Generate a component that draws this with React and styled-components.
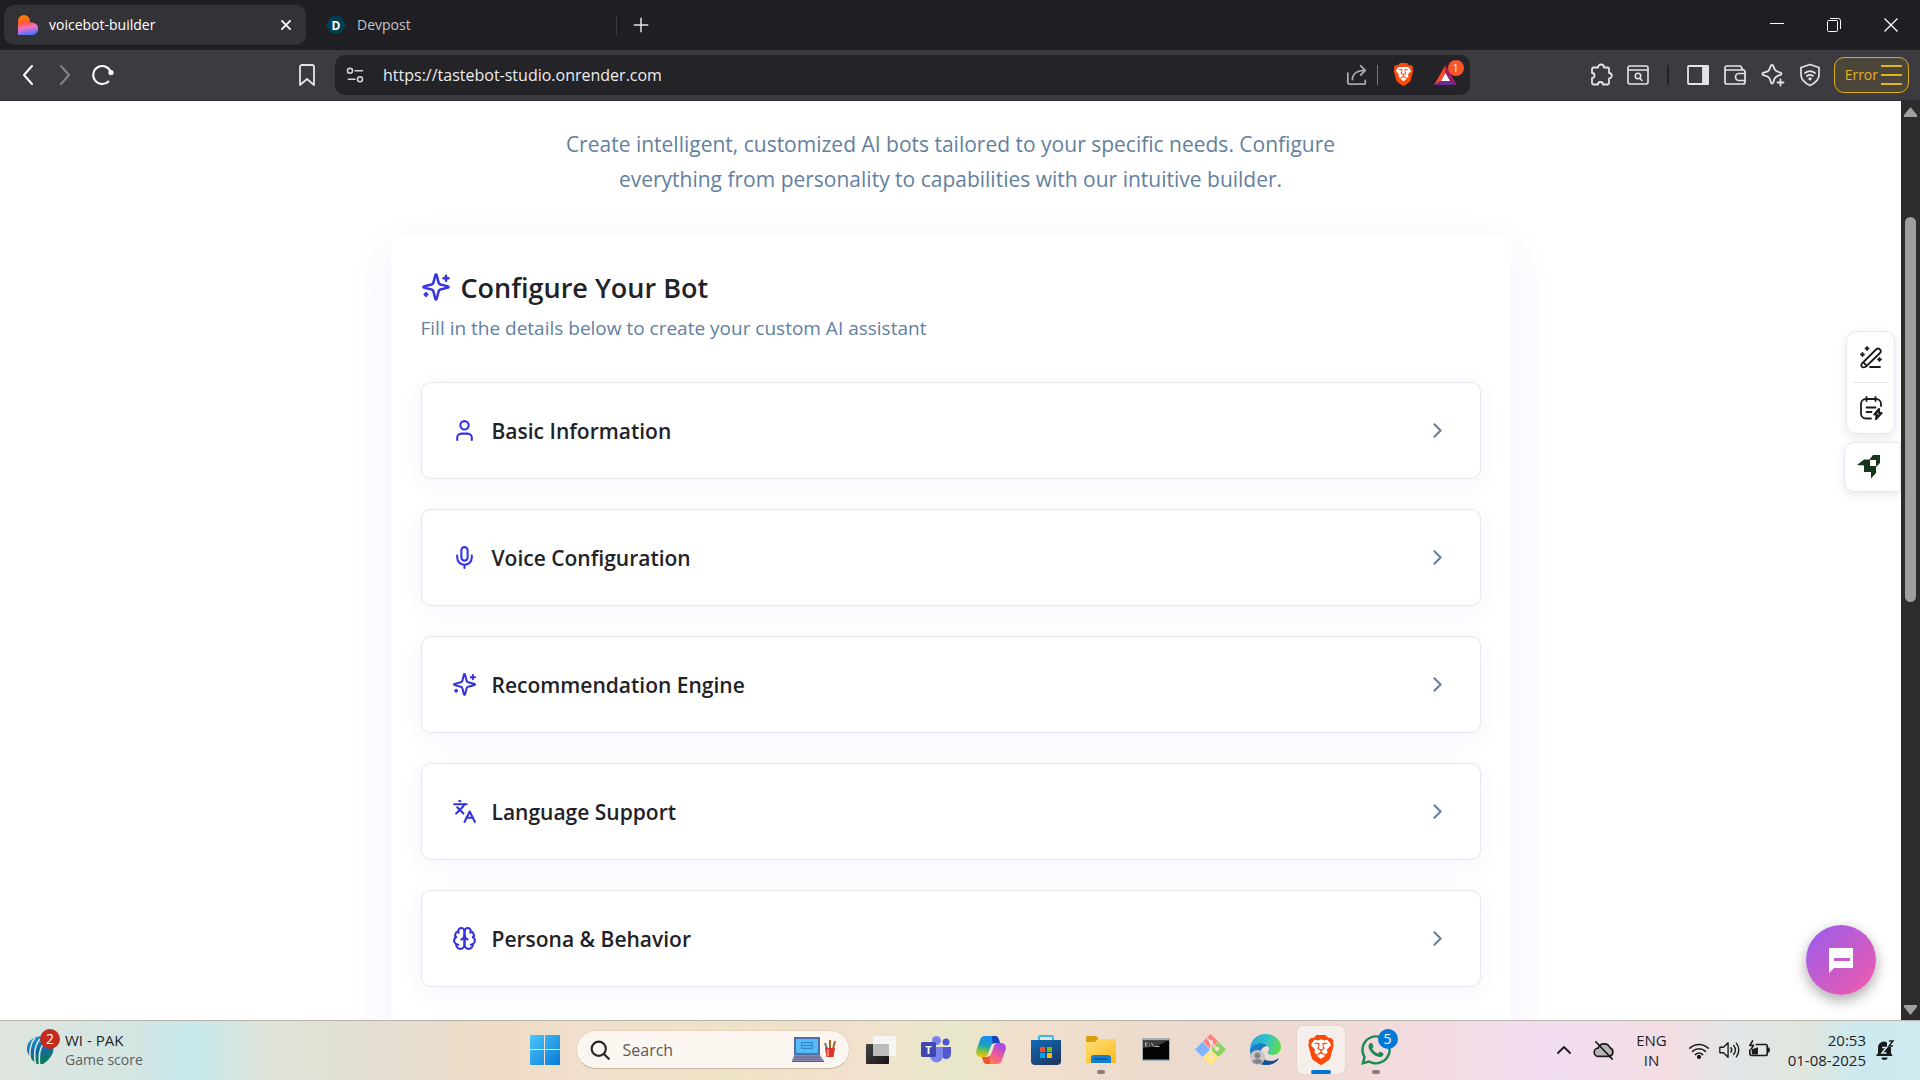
import React from "react";
import styled, { createGlobalStyle, css } from "styled-components";
import { ChevronRight, ChevronUp, Languages, Mic, User } from "lucide-react";
import { SiBrave } from "react-icons/si";
import { FaWhatsapp } from "react-icons/fa";

const ink = "#1f2328";
const slate = "#64809f";
const indigo = "#3634e0";

const GlobalStyle = createGlobalStyle`
  * {
    box-sizing: border-box;
  }
  body {
    margin: 0;
    overflow: hidden;
    font-family: "Open Sans", "Noto Sans", sans-serif;
    color: ${ink};
  }
  button, input {
    font: inherit;
    color: inherit;
    margin: 0;
    padding: 0;
    border: 0;
    background: none;
  }
  h1, h2, p {
    margin: 0;
  }
  svg {
    display: block;
    flex: none;
  }
`;

const Desktop = styled.div`
  display: grid;
  grid-template-rows: 50px 51px minmax(0, 1fr) 60px;
  height: 100vh;
`;

/* ---------- browser chrome ---------- */

const TabStrip = styled.header`
  display: flex;
  align-items: center;
  padding-left: 4px;
  background: #1f1e23;
  color: #c4c4c8;
`;

const Tab = styled.div`
  display: flex;
  align-items: center;
  gap: 11px;
  width: ${({ $active }) => ($active ? 302 : 304)}px;
  height: 40px;
  padding: 0 12px 0 14px;
  border-radius: 10px;
  font-size: 14px;
  line-height: 18px;
  ${({ $active }) =>
    $active &&
    css`
      margin-right: 6px;
      background: #333237;
      color: #fff;
    `}
  span {
    flex: 1;
  }
`;

const IconButton = styled.button`
  display: flex;
  align-items: center;
  justify-content: center;
  width: ${({ $w }) => $w || 36}px;
  height: ${({ $h }) => $h || 40}px;
  flex: none;
  color: ${({ $color }) => $color || "#e4e4e6"};
`;

const Divider = styled.i`
  width: ${({ $thick }) => ($thick ? 2 : 1)}px;
  height: 20px;
  margin: 0 ${({ $gap }) => $gap || 0}px;
  background: ${({ $color }) => $color};
`;

const WindowControls = styled.div`
  display: flex;
  margin-left: auto;
`;

const Toolbar = styled.nav`
  display: flex;
  align-items: center;
  padding: 0 11px 1px 9px;
  background: #3c3b40;
  border-bottom: 1px solid #2c2b30;
`;

const NavButtons = styled.div`
  display: flex;
  margin-right: 168px;
`;

const AddressBar = styled.div`
  display: flex;
  align-items: center;
  flex: 1;
  max-width: 1135px;
  height: 40px;
  margin-left: 10px;
  padding-left: 10px;
  padding-right: 8px;
  border-radius: 10px;
  background: #242328;
  input {
    flex: 1;
    min-width: 0;
    margin-left: 18px;
    font-size: 16px;
    color: #ececee;
    outline: none;
  }
`;

const BadgeHolder = styled.span`
  position: relative;
  display: flex;
`;

const RewardBadge = styled.b`
  position: absolute;
  top: -5px;
  right: -7px;
  width: 16px;
  height: 16px;
  border-radius: 50%;
  background: #fb542b;
  color: #fff;
  font-size: 10px;
  font-weight: 400;
  line-height: 16px;
  text-align: center;
`;

const ToolbarActions = styled.div`
  display: flex;
  align-items: center;
  margin-left: auto;
`;

const ErrorButton = styled.button`
  display: flex;
  align-items: center;
  gap: 3px;
  height: 36px;
  margin-left: 5px;
  padding: 0 6px 0 10px;
  border: 1px solid #deaf14;
  border-radius: 10px;
  background: #4b4639;
  color: #e3b51c;
  font-size: 14px;
`;

/* ---------- page ---------- */

const Viewport = styled.div`
  position: relative;
  display: flex;
  min-height: 0;
  overflow: hidden;
`;

const Page = styled.main`
  flex: 1;
  min-width: 0;
  overflow: hidden;
  padding-top: 26px;
  background: #fff;
`;

const Intro = styled.p`
  max-width: 800px;
  margin: 0 auto 39px;
  color: ${slate};
  font-size: 21px;
  line-height: 35px;
  text-align: center;
`;

const Panel = styled.section`
  max-width: 1120px;
  margin: 0 auto;
  padding: 30px 30px 60px;
  border-radius: 10px;
  background: #fff;
  box-shadow: 0 15px 45px rgba(70, 70, 235, 0.09);
`;

const PanelTitle = styled.h1`
  display: flex;
  align-items: center;
  gap: 10px;
  height: 42px;
  font-size: 27px;
  font-weight: 600;
  svg {
    color: ${indigo};
  }
`;

const PanelText = styled.p`
  color: ${slate};
  font-size: 19px;
  line-height: 40px;
`;

const SectionList = styled.div`
  display: grid;
  gap: 30px;
  margin-top: 34px;
`;

const SectionButton = styled.button`
  display: flex;
  align-items: center;
  gap: 15px;
  width: 100%;
  height: 97px;
  padding: 0 30px;
  border: 1px solid #e4e7ee;
  border-radius: 10px;
  background: #fff;
  box-shadow: 0 5px 25px rgba(70, 70, 235, 0.06);
  font-size: 21px;
  font-weight: 600;
  text-align: left;
  span {
    flex: 1;
  }
  svg {
    color: ${indigo};
  }
  svg:last-child {
    color: ${slate};
  }
`;

const SideTools = styled.aside`
  position: absolute;
  top: 230px;
  right: 19px;
  display: flex;
  flex-direction: column;
  align-items: flex-end;
  gap: 8px;
`;

const ToolGroup = styled.div`
  display: flex;
  flex-direction: column;
  align-items: ${({ $docked }) => ($docked ? "flex-start" : "center")};
  width: ${({ $docked }) => ($docked ? 57 : 49)}px;
  margin-right: ${({ $docked }) => ($docked ? 0 : 6)}px;
  border: 1px solid #e6e8f0;
  border-radius: ${({ $docked }) => ($docked ? "10px 0 0 10px" : "10px")};
  background: #fff;
  box-shadow: 0 3px 10px rgba(40, 40, 90, 0.1);
  hr {
    width: 35px;
    height: 1px;
    margin: 0;
    border: 0;
    background: #e2e4ee;
  }
`;

const ChatButton = styled.button`
  position: absolute;
  right: 44px;
  bottom: 25px;
  display: flex;
  align-items: center;
  justify-content: center;
  width: 70px;
  height: 70px;
  border-radius: 50%;
  background: linear-gradient(135deg, #9b5cea 5%, #ef5bae 95%);
  box-shadow: 0 5px 14px rgba(0, 0, 0, 0.35);
`;

const ScrollTrack = styled.div`
  display: flex;
  flex-direction: column;
  align-items: center;
  width: 19px;
  padding: 6px 0 5px;
  background: #2c2c2c;
`;

const ScrollThumb = styled.div`
  width: 11px;
  height: 385px;
  margin: 100px 0 auto;
  border-radius: 6px;
  background: #9f9f9f;
`;

/* ---------- taskbar ---------- */

const Taskbar = styled.footer`
  display: grid;
  grid-template-columns: 1fr auto 1fr;
  align-items: center;
  padding-bottom: 2px;
  border-top: 1px solid #b7b3ac;
  background: linear-gradient(
    90deg,
    #dfe5de 0%,
    #d3e6e2 7%,
    #c6e9ec 10%,
    #dfe4da 14%,
    #e5ddcf 21%,
    #efdcc5 26%,
    #f0dfcc 30%,
    #efe3c6 38%,
    #f2e0cd 44%,
    #e8e8ca 50%,
    #f1e0cc 53%,
    #ebdacd 63%,
    #f2dbdd 73%,
    #f2def2 81%,
    #f3dde1 87%,
    #e3e5e8 90%,
    #e0e6de 94%,
    #cbe9ef 97%,
    #d0e9f0 100%
  );
`;

const Widget = styled.button`
  display: flex;
  align-items: center;
  gap: 11px;
  justify-self: start;
  margin-left: 27px;
  font-size: 15px;
  line-height: 20px;
  text-align: left;
  small {
    display: block;
    color: #5c605f;
    font-size: 14px;
  }
`;

const CountBadge = styled.b`
  position: absolute;
  top: ${({ $top }) => $top}px;
  right: ${({ $right }) => $right}px;
  width: 20px;
  height: 20px;
  border-radius: 50%;
  background: ${({ $bg }) => $bg};
  color: #fff;
  font-size: 14px;
  font-weight: 400;
  line-height: 20px;
  text-align: center;
`;

const AppRow = styled.div`
  display: flex;
  align-items: center;
  gap: 7px;
`;

const AppButton = styled.button`
  position: relative;
  display: flex;
  align-items: center;
  justify-content: center;
  width: 48px;
  height: 48px;
  border-radius: 5px;
  ${({ $active }) =>
    $active &&
    css`
      background: #f6eeea;
      box-shadow: 0 0 1px rgba(0, 0, 0, 0.3);
    `}
  ${({ $mark }) =>
    $mark &&
    css`
      &::after {
        content: "";
        position: absolute;
        bottom: 0;
        left: 50%;
        width: ${$mark === "wide" ? 20 : 8}px;
        height: 4px;
        margin-left: ${$mark === "wide" ? -10 : -4}px;
        border-radius: 2px;
        background: ${$mark === "wide" ? "#0078d7" : "#857f7b"};
      }
    `}
`;

const SearchBox = styled.label`
  display: flex;
  align-items: center;
  gap: 13px;
  width: 274px;
  height: 39px;
  padding: 0 13px;
  border: 1px solid #e2d3bf;
  border-bottom-color: #c4b6a2;
  border-radius: 20px;
  background: #fbf6f0;
  input {
    flex: 1;
    min-width: 0;
    font-size: 16px;
    outline: none;
  }
  input::placeholder {
    color: #5d5b59;
    opacity: 1;
  }
`;

const Tray = styled.div`
  display: flex;
  align-items: center;
  justify-self: end;
  padding-right: 24px;
  font-size: 15px;
  line-height: 20px;
`;

const TrayText = styled.button`
  text-align: ${({ $align }) => $align};
  margin: 0 ${({ $right }) => $right}px 0 ${({ $left }) => $left}px;
  line-height: 20px;
`;

/* ---------- drawings ---------- */

const Line = ({ size = 24, width = 2, children, ...rest }) => (
  <svg
    width={size}
    height={size}
    viewBox="0 0 24 24"
    fill="none"
    stroke="currentColor"
    strokeWidth={width}
    strokeLinecap="round"
    strokeLinejoin="round"
    {...rest}
  >
    {children}
  </svg>
);

const SparklesIcon = ({ size }) => (
  <Line size={size}>
    <path d="M9.937 15.5A2 2 0 0 0 8.5 14.063l-6.135-1.582a.5.5 0 0 1 0-.962L8.5 9.936A2 2 0 0 0 9.937 8.5l1.582-6.135a.5.5 0 0 1 .963 0L14.063 8.5A2 2 0 0 0 15.5 9.937l6.135 1.581a.5.5 0 0 1 0 .964L15.5 14.063a2 2 0 0 0-1.437 1.437l-1.582 6.135a.5.5 0 0 1-.963 0z" />
    <path d="M20 3v4M22 5h-4M4 17v2M5 18H3" />
  </Line>
);

const BrainIcon = ({ size }) => (
  <Line size={size}>
    <path d="M12 5a3 3 0 1 0-5.997.125 4 4 0 0 0-2.526 5.77 4 4 0 0 0 .556 6.588A4 4 0 1 0 12 18Z" />
    <path d="M12 5a3 3 0 1 1 5.997.125 4 4 0 0 1 2.526 5.77 4 4 0 0 1-.556 6.588A4 4 0 1 1 12 18Z" />
    <path d="M15 13a4.5 4.5 0 0 1-3-4 4.5 4.5 0 0 1-3 4" />
    <path d="M17.599 6.5a3 3 0 0 0 .399-1.375M6.003 5.125A3 3 0 0 0 6.401 6.5" />
    <path d="M3.477 10.896a4 4 0 0 1 .585-.396M19.938 10.5a4 4 0 0 1 .585.396" />
    <path d="M6 18a4 4 0 0 1-1.967-.516M19.967 17.484A4 4 0 0 1 18 18" />
  </Line>
);

const BraveLogo = ({ size }) => (
  <svg width={size} height={size} viewBox="0 0 24 24">
    <path d="M5 5l4-1.500 3 .5 3-.5 4 1.500 1 4-3.500 8-4.500 4-4.500-4L4 9z" fill="#fff" />
    <SiBrave size={24} color="#fb4b0a" />
  </svg>
);

const LovableFavicon = () => (
  <svg width="20" height="20" viewBox="0 0 20 20">
    <defs>
      <linearGradient id="heart" x1="0.2" y1="0" x2="0.4" y2="1">
        <stop offset="0.1" stopColor="#ff7a00" />
        <stop offset="0.4" stopColor="#ff5a3c" />
        <stop offset="0.65" stopColor="#f46fc4" />
        <stop offset="1" stopColor="#4b73ff" />
      </linearGradient>
    </defs>
    <path d="M0 6a6 6 0 0 1 12 0v1.500h2a6 6 0 0 1 0 12.500H0z" fill="url(#heart)" />
  </svg>
);

const DevpostFavicon = () => (
  <svg width="20" height="20" viewBox="0 0 20 20">
    <path d="M5 1.300h10L20 10l-5 8.700H5L0 10z" fill="#003e54" />
    <text x="10" y="14.500" textAnchor="middle" fontSize="12" fontWeight="700" fill="#fff">
      D
    </text>
  </svg>
);

const RewardsIcon = () => (
  <svg width="23" height="20" viewBox="0 0 23 20">
    <path d="M11.500 0L0 20l7.500-4.500 4-7z" fill="#ff4724" />
    <path d="M11.500 0L23 20l-7.500-4.500-4-7z" fill="#9e1f63" />
    <path d="M0 20h23l-7.500-4.500h-8z" fill="#662d91" />
    <path d="M11.500 8l4.500 8H7z" fill="#fff" />
  </svg>
);

const ShieldWifiIcon = () => (
  <Line size={24} width={1.7}>
    <path d="M12 1.500l9 3V12c0 5-4 8-9 10.500C7 20 3 17 3 12V4.500z" />
    <path d="M7 10c3-2.300 7-2.300 10 0M9 13c1.800-1.300 4.200-1.300 6 0" />
    <circle cx="12" cy="15.800" r="0.8" fill="currentColor" />
  </Line>
);

const RocketIcon = () => (
  <svg width="24" height="24" viewBox="0 0 24 24" fill="#14361b">
    <path fillRule="evenodd" d="M0 10l7-5.500h5.500L16 0h7v8l-4 4v6l-5 5.500V17H7v-6.500zM13 5v6h6V5z" />
  </svg>
);

const StartIcon = () => (
  <svg width="30" height="30" viewBox="0 0 30 30">
    <defs>
      <linearGradient id="win" x1="0" y1="0" x2="1" y2="1" gradientUnits="objectBoundingBox">
        <stop offset="0" stopColor="#4cc8fb" />
        <stop offset="1" stopColor="#0878d6" />
      </linearGradient>
    </defs>
    <path
      d="M1 0h13v14H0V1a1 1 0 0 1 1-1zM16 0h13a1 1 0 0 1 1 1v13H15V0zM0 15h14v15H1a1 1 0 0 1-1-1zM15 15h15v14a1 1 0 0 1-1 1H15z"
      fill="url(#win)"
    />
  </svg>
);

const LaptopArt = () => (
  <svg width="44" height="26" viewBox="0 0 44 26">
    <path d="M2 0h26v18H2z" fill="#4d6ea8" />
    <path d="M4 2h22v14H4z" fill="#58baf5" />
    <path d="M9 5h12v7H9z" fill="#2f8bd0" />
    <path d="M10 7h10M10 10h10" stroke="#7fd0ff" />
    <path d="M2 18h26l4 6H0z" fill="#8a88ae" />
    <path d="M3 20h24M2 22h26" stroke="#66648c" />
    <path d="M0 24h32v1H0z" fill="#5c5a80" />
    <path d="M35 12l-2-6M38 12V3M41 12l2-8" stroke="#9b6b2c" strokeWidth="2" />
    <path d="M35 12l-1-3" stroke="#3b8ed8" strokeWidth="2" />
    <path d="M33 11h10l-1.500 9h-7z" fill="#dd3328" />
    <path d="M36 12v7" stroke="#f4867d" strokeWidth="2" />
  </svg>
);

const TaskViewIcon = () => (
  <svg width="30" height="28" viewBox="0 0 30 28">
    <defs>
      <linearGradient id="tv" x1="0" y1="0" x2="1" y2="1">
        <stop offset="0" stopColor="#444" />
        <stop offset="1" stopColor="#161616" />
      </linearGradient>
    </defs>
    <rect y="8" width="23" height="20" rx="1" fill="url(#tv)" />
    <rect x="7" width="23" height="20" rx="1" fill="#f5f5f5" />
    <path d="M7 8h16v12H8a1 1 0 0 1-1-1z" fill="#bcbcba" />
  </svg>
);

const TeamsIcon = () => (
  <svg width="30" height="27" viewBox="0 0 30 27">
    <circle cx="25" cy="6" r="3.500" fill="#5059c9" />
    <path d="M20 11h10v7a5 5 0 0 1-8 4z" fill="#5059c9" />
    <circle cx="15.500" cy="4.500" r="4.500" fill="#7b83eb" />
    <path d="M9 11h13v9a6.500 6.500 0 0 1-13 0z" fill="#7b83eb" />
    <rect y="6" width="15" height="15" rx="1.500" fill="#4048ae" />
    <text x="7.500" y="18" textAnchor="middle" fontSize="11" fontWeight="700" fill="#fff">
      T
    </text>
  </svg>
);

const CopilotIcon = () => (
  <svg width="30" height="28" viewBox="0 0 30 28">
    <defs>
      <linearGradient id="cpA" x1="0.4" y1="0" x2="0.2" y2="1">
        <stop offset="0.1" stopColor="#1a8df0" />
        <stop offset="0.45" stopColor="#17a6b8" />
        <stop offset="0.7" stopColor="#7fc03e" />
        <stop offset="1" stopColor="#f5c50a" />
      </linearGradient>
      <linearGradient id="cpB" x1="0.8" y1="0" x2="0.2" y2="1">
        <stop offset="0.1" stopColor="#a64ce0" />
        <stop offset="0.5" stopColor="#ee5a9c" />
        <stop offset="1" stopColor="#ff8a3d" />
      </linearGradient>
    </defs>
    <path d="M9 0h10c2 0 3 1 3.500 2.500L24 7h-4c-3 0-4.500 1-5.300 3.500L12 18c-.6 2-1.800 3-4 3H5c-4 0-5.500-3-4.500-7L4 4c.8-2.500 2.200-4 5-4z" fill="url(#cpA)" />
    <path d="M16 0h3c2 0 3 1 3.500 2.500L24 7h-4c-1.500 0-2.700.3-3.500 1z" fill="#1c42b8" />
    <path d="M21 28H11c-2 0-3-1-3.500-2.500L6 21h4c3 0 4.500-1 5.300-3.500L18 10c.6-2 1.800-3 4-3h3c4 0 5.500 3 4.500 7L26 24c-.8 2.500-2.200 4-5 4z" fill="url(#cpB)" />
    <path d="M14 28h-3c-2 0-3-1-3.500-2.500L6 21h4c1.500 0 2.700-.3 3.500-1z" fill="#f0562f" />
  </svg>
);

const StoreIcon = () => (
  <svg width="30" height="30" viewBox="0 0 30 30">
    <defs>
      <linearGradient id="store" x1="0" y1="0" x2="0.6" y2="1">
        <stop offset="0" stopColor="#0f6cbd" />
        <stop offset="1" stopColor="#1d3b66" />
      </linearGradient>
    </defs>
    <path d="M8 6V2a1 1 0 0 1 1-1h12a1 1 0 0 1 1 1v4" fill="none" stroke="#35b8f0" strokeWidth="2" />
    <path d="M0 5h30v21a4 4 0 0 1-4 4H4a4 4 0 0 1-4-4z" fill="url(#store)" />
    <path d="M9 12h5v5H9z" fill="#f25022" />
    <path d="M16 12h5v5h-5z" fill="#7fba00" />
    <path d="M9 18h5v5H9z" fill="#00a4ef" />
    <path d="M16 18h5v5h-5z" fill="#ffb900" />
  </svg>
);

const ExplorerIcon = () => (
  <svg width="30" height="27" viewBox="0 0 30 27">
    <defs>
      <linearGradient id="folder" x1="0" y1="0" x2="0.7" y2="1">
        <stop offset="0" stopColor="#ffe07a" />
        <stop offset="1" stopColor="#fdbc22" />
      </linearGradient>
    </defs>
    <path d="M0 1.500A1.500 1.500 0 0 1 1.500 0H10l3 3-2 5H0z" fill="#dd9c0b" />
    <path d="M0 6h9l3-3h16.500A1.500 1.500 0 0 1 30 4.500V27H0z" fill="url(#folder)" />
    <path d="M5 27v-5a3 3 0 0 1 3-3h14a3 3 0 0 1 3 3v5z" fill="#1380d3" />
    <path d="M8.500 23h13" stroke="#0b5394" strokeWidth="1.500" />
  </svg>
);

const TerminalIcon = () => (
  <svg width="28" height="23" viewBox="0 0 28 23">
    <rect width="28" height="23" fill="#a5adb5" />
    <rect x="1" y="2.500" width="26" height="19" fill="#050505" />
    <path d="M1 2.500h24C19 8 10 9 1 10z" fill="#3c3c3c" />
    <path d="M5.500 5H3.500v3h2M7.500 5.500v.8M7.500 7.500v.8M9.500 5l2 3.500M12.500 8.500h5" stroke="#bdbdbd" fill="none" />
  </svg>
);

const GitIcon = () => (
  <svg width="31" height="31" viewBox="0 0 31 31">
    <path d="M15.500 0L23 7.500 15.500 15 8 7.500z" fill="#ff7f7f" />
    <path d="M7.500 8l7.500 7.500L7.500 23 0 15.500z" fill="#80b3ff" />
    <path d="M23.500 8l7.500 7.500-7.500 7.500-7.500-7.500z" fill="#8dd35f" />
    <path d="M15.500 16l7.500 7.500-7.500 7.500L8 23.500z" fill="#ffe680" />
    <path d="M12 4l10 11M16 9v14" stroke="#f2e4d8" strokeWidth="1.500" />
    <g fill="#f2e4d8">
      <circle cx="16" cy="8" r="2" />
      <circle cx="22" cy="15" r="2.200" />
      <circle cx="16" cy="23" r="2" />
    </g>
  </svg>
);

const EdgeIcon = () => (
  <svg width="31" height="31" viewBox="0 0 31 31">
    <defs>
      <linearGradient id="edgeTop" x1="0" y1="0.3" x2="1" y2="0.5">
        <stop offset="0" stopColor="#2aa5e0" />
        <stop offset="0.5" stopColor="#30c2c8" />
        <stop offset="1" stopColor="#66dc4c" />
      </linearGradient>
      <linearGradient id="edgeLow" x1="0" y1="0" x2="0.8" y2="1">
        <stop offset="0" stopColor="#1a90dc" />
        <stop offset="1" stopColor="#0c4a92" />
      </linearGradient>
    </defs>
    <path d="M0 14C1 5 8 0 15.500 0 24 0 31 6 31 13c0 5-4 8-8.500 8-3 0-5-1-5-2.300 0-.8 1.500-1.200 1.500-3.700 0-3-3.500-6-8-6C6 9 1.500 11 0 14z" fill="url(#edgeTop)" />
    <path d="M0 15c1-3.500 5-6 10.500-6 3 0 5.500 1 7 3-4 0-7 3-7 7 0 5 4.500 9 10 9 3 0 6-1 8-3-3 4-7.500 6-13 6C7 31-.5 24 0 15z" fill="url(#edgeLow)" />
    <path d="M11 19c0 5 4.500 8 9.500 8 3.500 0 6-1.500 7.500-2.500.6-.4 1 .2.600.800C26 29 21 31 18 30.500 13 29.500 9 25 11 19z" fill="#124f94" />
    <circle cx="7.500" cy="23.500" r="7.500" fill="#c7c7c7" />
    <circle cx="7.500" cy="21.500" r="3" fill="#858585" />
    <path d="M2.500 28a5 3 0 0 1 10 0c-2.500 2.500-7.500 2.500-10 0z" fill="#858585" />
  </svg>
);

const CricketIcon = () => (
  <svg width="27" height="28" viewBox="0 0 27 28">
    <defs>
      <linearGradient id="icc" x1="0.3" y1="0" x2="0.5" y2="1">
        <stop offset="0" stopColor="#0aa0dc" />
        <stop offset="0.5" stopColor="#1268a8" />
        <stop offset="1" stopColor="#0b7d4c" />
      </linearGradient>
    </defs>
    <path d="M16 0c7 1 11 6 10.500 13-.5 7-6 12-10.500 15H9C3 22 0 18 0 12 0 6 6 0 16 0z" fill="url(#icc)" />
    <path d="M8 2C2 9 2 17 4 26M13 3C7 10 7 18 8.500 28M18 6c-6 6-6 14-5.500 22M0 22l8 6" fill="none" stroke="#dce6df" strokeWidth="1.600" />
  </svg>
);

const sections = [
  { title: "Basic Information", icon: User },
  { title: "Voice Configuration", icon: Mic },
  { title: "Recommendation Engine", icon: SparklesIcon },
  { title: "Language Support", icon: Languages },
  { title: "Persona & Behavior", icon: BrainIcon },
];

const BrowserTabs = () => (
  <TabStrip>
    <Tab $active>
      <LovableFavicon />
      <span>voicebot-builder</span>
      <IconButton $w={16} $color="#fff" aria-label="Close tab">
        <Line size={14} width={3}>
          <path d="M5 5l14 14M19 5L5 19" />
        </Line>
      </IconButton>
    </Tab>
    <Tab>
      <DevpostFavicon />
      <span>Devpost</span>
    </Tab>
    <Divider $color="#3c3b40" />
    <IconButton $w={48} aria-label="New tab">
      <Line size={18} width={2}>
        <path d="M12 3v18M3 12h18" />
      </Line>
    </IconButton>
    <WindowControls>
      <IconButton $w={57} aria-label="Minimize">
        <svg width="14" height="14" stroke="#fff">
          <path d="M0 5.500h14" />
        </svg>
      </IconButton>
      <IconButton $w={57} aria-label="Restore">
        <svg width="14" height="14" stroke="#fff" fill="none">
          <rect x="0.500" y="2.500" width="10" height="11" rx="1" />
          <path d="M3 .5h8.500a2 2 0 0 1 2 2V11" />
        </svg>
      </IconButton>
      <IconButton $w={58} aria-label="Close">
        <svg width="14" height="14" stroke="#fff" strokeWidth="1.300">
          <path d="M.5.500l13 13M13.500.500l-13 13" />
        </svg>
      </IconButton>
    </WindowControls>
  </TabStrip>
);

const BrowserToolbar = () => (
  <Toolbar>
    <NavButtons>
      <IconButton $w={37} $color="#fff" aria-label="Back">
        <Line size={24} width={2}>
          <path d="M16 3l-8 9 8 9" />
        </Line>
      </IconButton>
      <IconButton $w={37} $color="#85848a" aria-label="Forward">
        <Line size={24} width={2}>
          <path d="M8 3l8 9-8 9" />
        </Line>
      </IconButton>
      <IconButton $w={38} $color="#fff" aria-label="Reload">
        <Line size={24} width={2}>
          <path d="M18.500 18.500A9 9 0 1 1 21 10" />
          <circle cx="21" cy="9.500" r="1.600" fill="currentColor" />
        </Line>
      </IconButton>
    </NavButtons>
    <IconButton $w={36} aria-label="Bookmark this page">
      <Line size={24} width={1.8}>
        <path d="M5 4a2 2 0 0 1 2-2h10a2 2 0 0 1 2 2v18l-7-6-7 6z" />
      </Line>
    </IconButton>
    <AddressBar>
      <Line size={20} width={1.8} color="#d8d8da">
        <circle cx="6" cy="7" r="3" />
        <circle cx="18" cy="17" r="3" />
        <path d="M12 7h9M4 17h8" />
      </Line>
      <input aria-label="Address" defaultValue="https://tastebot-studio.onrender.com" />
      <IconButton $w={40} $color="#a9a9ad" aria-label="Share">
        <Line size={22} width={2}>
          <path d="M2 10v10a2 2 0 0 0 2 2h16a1 1 0 0 0 1-1v-3" />
          <path d="M7 17c0-6 5-10 14-10M16 2l5 5-5 5" />
        </Line>
      </IconButton>
      <Divider $color="#77767b" />
      <IconButton $w={50} aria-label="Brave Shields">
        <BraveLogo size={23} />
      </IconButton>
      <IconButton $w={34} aria-label="Brave Rewards">
        <BadgeHolder>
          <RewardsIcon />
          <RewardBadge>1</RewardBadge>
        </BadgeHolder>
      </IconButton>
    </AddressBar>
    <ToolbarActions>
      <IconButton $w={37} aria-label="Extensions">
        <Line size={24} width={1.8}>
          <path d="M3 6a1.500 1.500 0 0 1 1.500-1.500H9a3 3 0 0 1 6 0h3.500A1.500 1.500 0 0 1 20 6v4a2.500 2.500 0 0 1 0 5.500V20a1.500 1.500 0 0 1-1.500 1.500H14a2.500 2.500 0 0 0-5 0H4.500A1.500 1.500 0 0 1 3 20v-5a2.500 2.500 0 0 0 0-5z" />
        </Line>
      </IconButton>
      <IconButton $w={37} aria-label="Search tabs">
        <Line size={24} width={1.6}>
          <rect x="2" y="3" width="20" height="18" rx="2" />
          <path d="M2 7h20M14 15.500l2 2" />
          <circle cx="12" cy="13" r="2.700" />
        </Line>
      </IconButton>
      <Divider $thick $gap={10} $color="#242328" />
      <IconButton $w={38} aria-label="Side panel">
        <Line size={24} width={1.8}>
          <rect x="2" y="3" width="20" height="18" rx="1" />
          <path d="M17 3h5v18h-5z" fill="currentColor" />
        </Line>
      </IconButton>
      <IconButton $w={37} aria-label="Wallet">
        <Line size={24} width={1.7}>
          <path d="M20 7l-2-3.300a1.500 1.500 0 0 0-1.300-.7H4a2 2 0 0 0-2 2v14a2 2 0 0 0 2 2h16a2 2 0 0 0 2-2V9a2 2 0 0 0-2-2H2.500" />
          <path d="M22 10.500h-6a3.500 3.500 0 0 0 0 7h6" />
        </Line>
      </IconButton>
      <IconButton $w={38} aria-label="Leo AI">
        <Line size={24} width={1.8}>
          <path d="M11 2c.8 0 1.200.5 1.500 1.500.8 3.300 1.700 4.700 5 5.500l2 .6c1.300.4 1.300 1.900 0 2.300-4 1-5.600 1.800-6.500 5l-.7 2.700c-.4 1.300-1.900 1.300-2.300 0-1-4.500-2-6.200-6-7l-1.500-.4c-1.500-.4-1.500-2.200 0-2.600C7 8.800 8.200 8 9.500 3.500 9.800 2.500 10.200 2 11 2z" />
          <path d="M19.500 16.500v6M16.500 19.500h6" />
        </Line>
      </IconButton>
      <IconButton $w={37} aria-label="VPN">
        <ShieldWifiIcon />
      </IconButton>
      <ErrorButton>
        Error
        <svg width="21" height="20" stroke="currentColor" strokeWidth="2">
          <path d="M0 1h21M0 10h21M0 19h21" />
        </svg>
      </ErrorButton>
    </ToolbarActions>
  </Toolbar>
);

const BuilderPage = () => (
  <Page>
    <Intro>
      Create intelligent, customized AI bots tailored to your specific needs.
      Configure everything from personality to capabilities with our intuitive
      builder.
    </Intro>
    <Panel>
      <PanelTitle>
        <SparklesIcon size={30} />
        Configure Your Bot
      </PanelTitle>
      <PanelText>
        Fill in the details below to create your custom AI assistant
      </PanelText>
      <SectionList>
        {sections.map(({ title, icon: Icon }) => (
          <SectionButton key={title} aria-expanded="false">
            <Icon size={25} />
            <span>{title}</span>
            <ChevronRight size={25} />
          </SectionButton>
        ))}
      </SectionList>
    </Panel>
  </Page>
);

const FloatingTools = () => (
  <>
    <SideTools>
      <ToolGroup>
        <IconButton $w={47} $h={50} $color="#1c1c1e" aria-label="Improve writing">
          <Line size={24} width={1.8}>
            <path d="M3 18.500L17 4.500a2.500 2.500 0 0 1 4 3.500L7 21.500c-1.500 1-3 1-4 .5-.8-1-.8-2.500 0-3.500z" />
            <path d="M5 18l2 2M11 22h10" />
            <path d="M8 2v3M6.500 3.500h3M3.500 8v3M2 9.500h3M20.500 13v3M19 14.500h3" />
          </Line>
        </IconButton>
        <hr />
        <IconButton $w={47} $h={50} $color="#1c1c1e" aria-label="Quick notes">
          <Line size={24} width={1.8}>
            <path d="M12 22.500H7a5 5 0 0 1-5-5V8a5 5 0 0 1 5-5h10a5 5 0 0 1 5 5v2" />
            <path d="M7.500 1v4M16.500 1v4M7.500 11.500h9M7.500 16h5" />
            <path d="M20 13l-4.500 5.500H18l-1 4.500 5.500-6H20z" strokeWidth="2.200" />
          </Line>
        </IconButton>
      </ToolGroup>
      <ToolGroup $docked>
        <IconButton $w={47} $h={48} aria-label="Launch assistant">
          <RocketIcon />
        </IconButton>
      </ToolGroup>
    </SideTools>
    <ScrollTrack>
      <svg width="13" height="10" viewBox="0 0 13 10" fill="#9f9f9f">
        <path d="M6.500 0L13 8v2H0V8z" />
      </svg>
      <ScrollThumb />
      <svg width="13" height="10" viewBox="0 0 13 10" fill="#9f9f9f">
        <path d="M0 0h13v2l-6.500 8L0 2z" />
      </svg>
    </ScrollTrack>
    <ChatButton aria-label="Open chat">
      <svg width="24" height="25" viewBox="0 0 24 25">
        <path d="M0 0h24v20H5l-5 5z" fill="#fff" />
        <path d="M5 11.500h16" stroke="#c65bcd" strokeWidth="3" />
      </svg>
    </ChatButton>
  </>
);

const WindowsTaskbar = () => (
  <Taskbar>
    <Widget>
      <BadgeHolder>
        <CricketIcon />
        <CountBadge $top={-7} $right={-6} $bg="#c42b1c">
          2
        </CountBadge>
      </BadgeHolder>
      <span>
        WI - PAK
        <small>Game score</small>
      </span>
    </Widget>
    <AppRow>
      <AppButton aria-label="Start">
        <StartIcon />
      </AppButton>
      <SearchBox>
        <Line size={20} width={2.600} color="#262626">
          <circle cx="10.500" cy="10.500" r="8.500" />
          <path d="M17 17l5.500 5.500" />
        </Line>
        <input aria-label="Search" placeholder="Search" />
        <LaptopArt />
      </SearchBox>
      <AppButton aria-label="Task view">
        <TaskViewIcon />
      </AppButton>
      <AppButton aria-label="Teams">
        <TeamsIcon />
      </AppButton>
      <AppButton aria-label="Copilot">
        <CopilotIcon />
      </AppButton>
      <AppButton aria-label="Microsoft Store">
        <StoreIcon />
      </AppButton>
      <AppButton $mark="dot" aria-label="File Explorer">
        <ExplorerIcon />
      </AppButton>
      <AppButton aria-label="Command Prompt">
        <TerminalIcon />
      </AppButton>
      <AppButton aria-label="Git">
        <GitIcon />
      </AppButton>
      <AppButton aria-label="Edge">
        <EdgeIcon />
      </AppButton>
      <AppButton $active $mark="wide" aria-label="Brave">
        <BraveLogo size={30} />
      </AppButton>
      <AppButton $mark="dot" aria-label="WhatsApp">
        <FaWhatsapp size={34} color="#1d8a54" />
        <CountBadge $top={3} $right={2} $bg="#0078d7">
          5
        </CountBadge>
      </AppButton>
    </AppRow>
    <Tray>
      <IconButton $w={40} $color="#1b1b1b" aria-label="Hidden icons">
        <ChevronUp size={24} strokeWidth={1.8} />
      </IconButton>
      <IconButton $w={40} $color="#1b1b1b" aria-label="OneDrive">
        <Line size={22} width={1.8}>
          <path d="M6 19a4.500 4.500 0 0 1-.5-9A7 7 0 0 1 18.500 9.500 5 5 0 0 1 18 19z" fill="#b9b4b6" />
          <path d="M3 3l18 19" />
        </Line>
      </IconButton>
      <TrayText $align="center" $left={12} $right={17}>
        ENG
        <br />
        IN
      </TrayText>
      <IconButton $w={30} $color="#1b1b1b" aria-label="Wi-Fi">
        <Line size={22} width={1.7}>
          <path d="M2 10c5.800-5.300 14.200-5.300 20 0M5 13.500c4-3.700 10-3.700 14 0M8 17c2.300-2.200 5.700-2.200 8 0" />
          <circle cx="12" cy="19.500" r="1.500" fill="currentColor" />
        </Line>
      </IconButton>
      <IconButton $w={30} $color="#1b1b1b" aria-label="Volume">
        <Line size={22} width={1.5}>
          <path d="M2 9h4l5-5v16l-5-5H2z" />
          <path d="M14 9.500a4 4 0 0 1 0 5M17 7a8 8 0 0 1 0 10M20 4.500a12 12 0 0 1 0 15" />
        </Line>
      </IconButton>
      <IconButton $w={30} $color="#1b1b1b" aria-label="Battery">
        <Line size={22} width={1.8}>
          <path d="M9 6h10a2 2 0 0 1 2 2v8a2 2 0 0 1-2 2H4a2 2 0 0 1-2-2v-4" />
          <path d="M5 16v-4l5-2v6z" fill="currentColor" />
          <path d="M22.500 10.500v3" strokeWidth="2.500" />
          <path d="M5 2L2 7h4L3.500 11" />
        </Line>
      </IconButton>
      <TrayText $align="right" $left={14} $right={10}>
        20:53
        <br />
        01-08-2025
      </TrayText>
      <svg width="20" height="20" viewBox="0 0 20 20" fill="#1b1b1b" role="img" aria-label="Notifications">
        <path d="M2 8a6 6 0 0 1 9-5.500V7h4v6l1.500 3H0l2-3z" />
        <path d="M5.500 17.500h6a3 2.500 0 0 1-6 0z" />
        <path d="M6 7.500h4.500L6 13h4.500" fill="none" stroke="#cfe9f0" strokeWidth="1.500" />
        <path d="M13 1h4l-4 5h4" fill="none" stroke="#1b1b1b" strokeWidth="1.400" />
      </svg>
    </Tray>
  </Taskbar>
);

const App = () => {
  return (
    <>
      <GlobalStyle />
      <Desktop>
        <BrowserTabs />
        <BrowserToolbar />
        <Viewport>
          <BuilderPage />
          <FloatingTools />
        </Viewport>
        <WindowsTaskbar />
      </Desktop>
    </>
  );
};

export default App;
